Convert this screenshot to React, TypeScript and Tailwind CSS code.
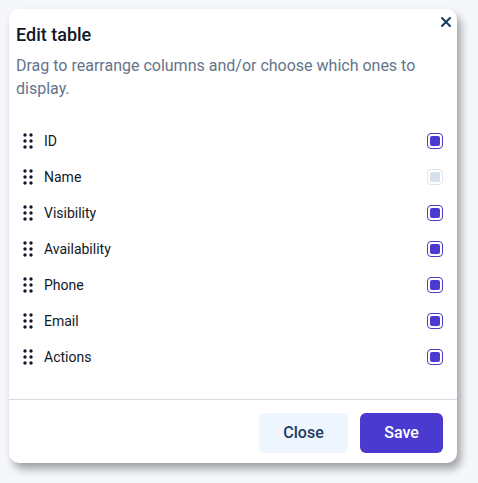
import React from 'react';

const columns = [
  { name: 'ID', checked: true },
  { name: 'Name', checked: true, disabled: true },
  { name: 'Visibility', checked: true },
  { name: 'Availability', checked: true },
  { name: 'Phone', checked: true },
  { name: 'Email', checked: true },
  { name: 'Actions', checked: true },
];

const DragHandle = () => (
  <svg width="12" height="18" viewBox="0 0 12 18" className="shrink-0">
    {[3, 9, 15].map((y) =>
      [3, 9].map((x) => <circle key={`${x}-${y}`} cx={x} cy={y} r="1.7" fill="#111827" />)
    )}
  </svg>
);

const Check = ({ disabled }: { disabled?: boolean }) => (
  <div
    className={`w-4 h-4 rounded-[4px] border p-[2px] ${
      disabled ? 'border-[#dbe4ee]' : 'border-[#4c3dc9]'
    }`}
  >
    <div className={`w-full h-full rounded-[2px] ${disabled ? 'bg-[#d5e0ea]' : 'bg-[#4a3ad0]'}`} />
  </div>
);

export default function App() {
  return (
    <div
      className="w-[478px] h-[483px] bg-[#f5f7fb] pt-[9px] pl-[9px]"
      style={{ fontFamily: 'Roboto, "Noto Sans", sans-serif' }}
    >
      <div className="relative w-[448px] h-[454px] bg-white rounded-[10px] shadow-[4px_6px_8px_rgba(0,0,0,0.35)] flex flex-col">
        <button className="absolute right-[3px] top-[5px] text-[#1e3a5f]">
          <svg width="16" height="16" viewBox="0 0 16 16">
            <path d="M4 4l8 8M12 4l-8 8" stroke="currentColor" strokeWidth="2" strokeLinecap="round" />
          </svg>
        </button>
        <div className="px-[7px] pt-[15px]">
          <h2 className="text-[18px] leading-[22px] font-medium text-[#111827]">Edit table</h2>
          <p className="mt-[8px] text-[16px] leading-[23px] text-[#64748b] pr-6">
            Drag to rearrange columns and/or choose which ones to display.
          </p>
        </div>
        <div className="mt-[23px] flex flex-col px-[7px]">
          {columns.map((c) => (
            <div key={c.name} className="h-9 flex items-center">
              <div className="pl-[6px] w-[28px]">
                <DragHandle />
              </div>
              <span className="text-[14px] text-[#111827] flex-1">{c.name}</span>
              <div className="pr-[7px]">
                <Check disabled={c.disabled} />
              </div>
            </div>
          ))}
        </div>
        <div className="mt-auto border-t border-[#d9dde3] h-[64px] flex items-center justify-end gap-3 px-[14px] pt-[3px]">
          <button className="w-[89px] h-10 rounded-[6px] bg-[#eff5ff] text-[#1e3a5f] text-[16px] font-medium">
            Close
          </button>
          <button className="w-[83px] h-10 rounded-[6px] bg-[#4a3ad0] text-white text-[16px] font-medium">
            Save
          </button>
        </div>
      </div>
    </div>
  );
}
